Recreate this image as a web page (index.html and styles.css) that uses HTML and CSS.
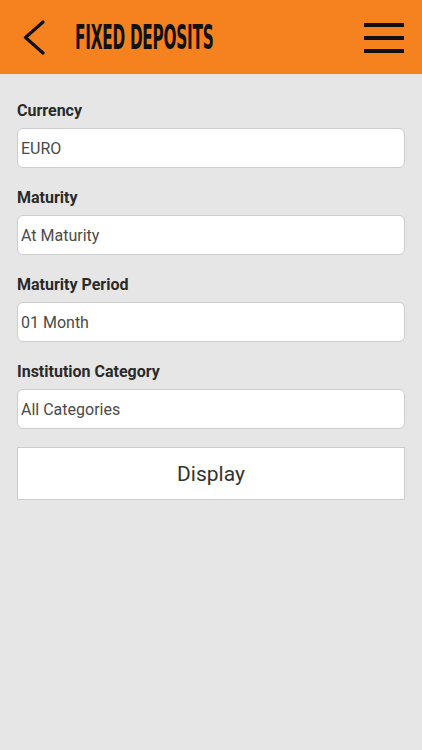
FILE: index.html
```html
<!DOCTYPE html>
<html>
<head>
<meta charset="utf-8">
<link rel="stylesheet" href="styles.css">
</head>
<body>
<header class="topbar">
  <svg class="back" width="24" height="36" viewBox="0 0 24 36"><path d="M21 2 L3.5 17.5 L21 33" fill="none" stroke="#111" stroke-width="3.2" stroke-linecap="round" stroke-linejoin="round"/></svg>
  <h1 class="title"><span>FIXED DEPOSITS</span></h1>
  <svg class="menu" width="40" height="32" viewBox="0 0 40 32"><rect x="0" y="1" width="40" height="4" fill="#111"/><rect x="0" y="14" width="40" height="4" fill="#111"/><rect x="0" y="27" width="40" height="4" fill="#111"/></svg>
</header>
<main class="form">
  <div class="field">
    <label class="label">Currency</label>
    <div class="select">EURO</div>
  </div>
  <div class="field">
    <label class="label">Maturity</label>
    <div class="select">At Maturity</div>
  </div>
  <div class="field">
    <label class="label">Maturity Period</label>
    <div class="select">01 Month</div>
  </div>
  <div class="field last">
    <label class="label">Institution Category</label>
    <div class="select">All Categories</div>
  </div>
  <button class="btn">Display</button>
</main>
</body>
</html>
```
FILE: styles.css
```css
html, body {
  margin: 0;
  padding: 0;
  background: #e6e6e6;
  font-family: Roboto, "Liberation Sans", sans-serif;
}
.topbar {
  height: 74px;
  background: #f5821f;
  display: flex;
  align-items: center;
  padding: 0 18px 0 22px;
  box-sizing: border-box;
}
.back {
  flex: none;
  margin-top: 2px;
}
.title {
  flex: 1;
  margin: 0 0 0 29px;
  font-family: "DejaVu Sans", sans-serif;
  font-stretch: condensed;
  font-weight: bold;
  font-size: 34px;
  line-height: 1;
  color: #111;
  white-space: nowrap;
  letter-spacing: -0.5px;
}
.title span {
  display: inline-block;
  transform: scaleX(0.5);
  transform-origin: left center;
}
.menu {
  flex: none;
  margin-top: 1px;
}
.form {
  padding: 26px 17px 0 17px;
  display: flex;
  flex-direction: column;
}
.field {
  display: flex;
  flex-direction: column;
  margin-bottom: 19px;
}
.field.last {
  margin-bottom: 18px;
}
.label {
  font-size: 16px;
  font-weight: bold;
  color: #2a2a2a;
  line-height: 21px;
  margin-bottom: 7px;
}
.select {
  height: 40px;
  box-sizing: border-box;
  background: #fff;
  border: 1px solid #cdcdcd;
  border-radius: 6px;
  padding: 0 3px;
  display: flex;
  align-items: center;
  font-size: 16px;
  color: #4a4a4a;
}
.btn {
  height: 53px;
  background: #fff;
  border: 1px solid #cccccc;
  border-radius: 0;
  font-family: Roboto, "Liberation Sans", sans-serif;
  font-size: 21px;
  color: #333;
  padding: 0;
}
```
